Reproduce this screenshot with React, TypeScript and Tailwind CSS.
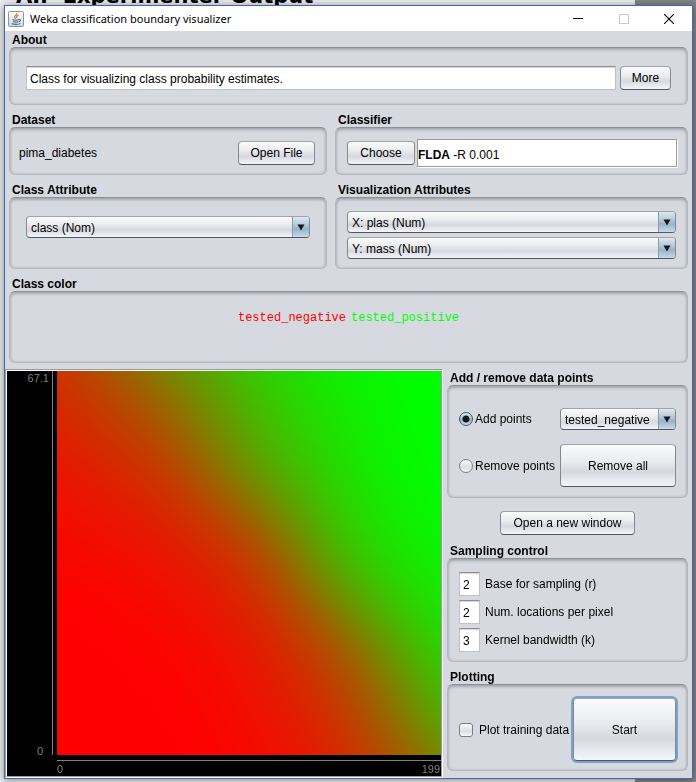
import { useEffect, useRef, useState } from "react";
import type { ButtonHTMLAttributes, ReactNode } from "react";

/* Probability of the "tested_positive" class on an evenly spaced 5x5 grid. */
const PROBABILITIES = [
  [0.21, 0.47, 0.76, 0.93, 0.99],
  [0.1, 0.23, 0.57, 0.86, 0.98],
  [0.03, 0.08, 0.25, 0.69, 0.93],
  [0.006, 0.022, 0.1, 0.36, 0.78],
  [0.002, 0.007, 0.045, 0.19, 0.54],
];

const LOGITS = PROBABILITIES.map((row) => row.map((p) => Math.log(p / (1 - p))));

function cubic(values: number[], t: number) {
  const last = values.length - 1;
  const i = Math.min(last - 1, Math.floor(t));
  const f = t - i;
  const b = values[i];
  const c = values[i + 1];
  const a = i > 0 ? values[i - 1] : 2 * b - c;
  const d = i + 2 <= last ? values[i + 2] : 2 * c - b;
  return b + 0.5 * f * (c - a + f * (2 * a - 5 * b + 4 * c - d + f * (3 * (b - c) + d - a)));
}

function BoundaryMap() {
  const ref = useRef<HTMLCanvasElement>(null);
  useEffect(() => {
    const ctx = ref.current?.getContext("2d");
    if (!ctx) return;
    const size = 384;
    const image = ctx.createImageData(size, size);
    for (let x = 0; x < size; x++) {
      const column = LOGITS.map((row) => cubic(row, (x / (size - 1)) * 4));
      for (let y = 0; y < size; y++) {
        const raw = 1 / (1 + Math.exp(-cubic(column, (y / (size - 1)) * 4)));
        const p = Math.min(1, Math.max(0, (raw - 0.01) / 0.98));
        const at = (y * size + x) * 4;
        image.data[at] = 255 * (1 - p);
        image.data[at + 1] = 255 * p;
        image.data[at + 3] = 255;
      }
    }
    ctx.putImageData(image, 0, 0);
  }, []);
  return <canvas ref={ref} width={384} height={384} aria-label="Class boundary plot" className="block aspect-square w-full" />;
}

function Panel({ title, className = "", children }: { title: string; className?: string; children: ReactNode }) {
  return (
    <section className="flex flex-col">
      <h2 className="h-[15px] pl-[3px] text-xs leading-[17px] font-bold">{title}</h2>
      <div
        className={`flex-1 rounded-md border border-[#b4b7bc] border-t-[#8d9095] shadow-[inset_0_2px_3px_rgba(60,65,75,0.28),inset_0_0_3px_rgba(60,65,75,0.2)] ${className}`}
      >
        {children}
      </div>
    </section>
  );
}

function Button({ className = "h-6 px-[11px]", ...rest }: ButtonHTMLAttributes<HTMLButtonElement>) {
  return (
    <button
      type="button"
      className={`shrink-0 rounded-[4px] border border-[#85888e] border-t-[#a0a3a8] border-b-[#53575d] bg-[linear-gradient(#fbfbfc,#e9ebee_40%,#d5d8de_65%,#f3f6fa)] text-center whitespace-nowrap ${className}`}
      {...rest}
    />
  );
}

function Combo({ label, value, options }: { label: string; value: string; options?: string[] }) {
  return (
    <div className="grid h-[22px] overflow-hidden rounded-[4px] border border-[#85888e] border-t-[#a0a3a8] border-b-[#53575d] bg-[linear-gradient(#fbfbfc,#e9ebee_40%,#d5d8de_65%,#f3f6fa)]">
      <select aria-label={label} defaultValue={value} className="w-full appearance-none bg-transparent pt-px pl-1 [grid-area:1/1]">
        {(options ?? [value]).map((o) => (
          <option key={o}>{o}</option>
        ))}
      </select>
      <span className="pointer-events-none flex w-[17px] items-center justify-center justify-self-end border-l border-[#7f9db6] bg-[linear-gradient(#dfe8f0,#b5c7d6_40%,#9db2c5_60%,#c3dbee)] [grid-area:1/1]">
        <svg width="8" height="7" viewBox="0 0 8 7" aria-hidden="true">
          <path d="M0.5 0.5H7.5L4 6.5Z" fill="#15191f" />
        </svg>
      </span>
    </div>
  );
}

const FIELD = "border border-[#c0c2c6] border-t-[#8d8e91] bg-white shadow-[inset_0_1px_1px_rgba(0,0,0,0.18)] outline-none";

function NumberField({ id, label, value }: { id: string; label: string; value: string }) {
  return (
    <div className="flex items-center gap-[5px]">
      <input id={id} defaultValue={value} className={`h-6 w-[21px] pt-px pl-[3px] ${FIELD}`} />
      <label htmlFor={id}>{label}</label>
    </div>
  );
}

function PointMode({ label, checked, onChange }: { label: string; checked: boolean; onChange: () => void }) {
  return (
    <label className="flex items-center gap-[2px] whitespace-nowrap">
      <input
        type="radio"
        name="mode"
        checked={checked}
        onChange={onChange}
        className="size-[14px] shrink-0 appearance-none rounded-full border border-[#7c7f85] bg-[linear-gradient(#fafafb,#dcdfe4_60%,#f5f7fa)] checked:border-[#3f5566] checked:bg-[radial-gradient(circle,#14181c_0_3px,transparent_4px),linear-gradient(#e3ecf3,#9fb5c7_60%,#c8dff0)]"
      />
      {label}
    </label>
  );
}

function JavaIcon() {
  return (
    <svg width="16" height="16" viewBox="0 0 16 16" className="shrink-0" aria-hidden="true">
      <defs>
        <linearGradient id="cup" x1="0" y1="0" x2="0" y2="1">
          <stop offset="0" stopColor="#fdfdfd" />
          <stop offset="1" stopColor="#cfd8de" />
        </linearGradient>
      </defs>
      <rect x="0.5" y="0.5" width="15" height="15" rx="1" fill="url(#cup)" stroke="#8096a6" />
      <path d="M8.8 2C9.6 4 5.6 4.6 6.8 6.6L7.6 8M10.4 4.2C8.4 5 8.4 6 9 7" fill="none" stroke="#e8762c" strokeWidth="1.3" />
      <path d="M4.5 8.6C6 9.4 9.5 9.3 11 8.6M5 10.4C6.5 11.2 9 11.1 10.3 10.5M11 8.6C13.2 8 13 10.4 10.8 10.8M3.6 12.5C6 13.7 10.5 13.6 12.4 12.4" fill="none" stroke="#47708f" strokeWidth="1.1" />
    </svg>
  );
}

function TitleBar() {
  return (
    <header className="flex h-[25px] items-center bg-white pl-[3px] text-black">
      <JavaIcon />
      <h1 className="flex-1 pl-[6px] font-['Noto_Sans','Open_Sans',sans-serif] text-[11px] leading-4">Weka classification boundary visualizer</h1>
      <button type="button" aria-label="Minimize" className="flex h-full w-[46px] items-center justify-center">
        <svg width="10" height="10" viewBox="0 0 10 10">
          <path d="M0 4.5H10" stroke="#000" />
        </svg>
      </button>
      <button type="button" aria-label="Maximize" className="flex h-full w-[45px] items-center justify-center">
        <svg width="10" height="10" viewBox="0 0 10 10">
          <path d="M0.5 0.5H9.5V9.5H0.5Z" fill="none" stroke="#c8c8c8" />
        </svg>
      </button>
      <button type="button" aria-label="Close" className="flex h-full w-[46px] items-center justify-center">
        <svg width="10" height="10" viewBox="0 0 10 10">
          <path d="M0 0L10 10M10 0L0 10" stroke="#000" strokeWidth="1.1" />
        </svg>
      </button>
    </header>
  );
}

function Plot() {
  return (
    <div className="flex min-w-0 flex-1 self-start border border-[#9a9b9e] border-r-white border-b-white">
      <div className="flex min-w-0 flex-1 border border-white border-r-[#9a9b9e] border-b-[#9a9b9e] bg-black text-[11px] leading-2 text-[#808080]">
        <div className="flex w-[46px] shrink-0 flex-col pb-[21px]">
          <div className="flex flex-1 flex-col items-end justify-between border-r border-[#808080] pt-[3px] pr-[3px]">
            <span>67.1</span>
            <span className="pr-[6px]">0</span>
          </div>
        </div>
        <div className="min-w-0 flex-1 pl-1">
          <BoundaryMap />
          <div className="mt-[5px] flex h-4 items-center justify-between border-t border-[#808080] pt-px pr-px">
            <span>0</span>
            <span>199</span>
          </div>
        </div>
      </div>
    </div>
  );
}

export default function App() {
  const [mode, setMode] = useState("add");
  return (
    <div className="min-h-screen overflow-hidden bg-[linear-gradient(to_left,#858585_61px,#ececec_61px)] pr-[3px] pb-[3px] pl-1 font-['Liberation_Sans',Arial,sans-serif] text-xs leading-4 text-black">
      <div className="flex h-[5px] items-end overflow-hidden pl-[12px] font-['DejaVu_Sans',sans-serif] text-[21px] leading-[18px] font-bold whitespace-nowrap">
        <p>AI.&nbsp; Experimenter Output</p>
      </div>
      <div className="relative border border-[#4267b5] bg-[#d6d9df] shadow-[0_1px_8px_rgba(0,0,0,0.45)]">
        <TitleBar />
        <main>
          <div className="flex flex-col gap-[7px] px-[4px] pt-px">
            <Panel title="About" className="flex gap-1 px-4 pt-[18px] pb-[14px]">
              <input aria-label="About" readOnly value="Class for visualizing class probability estimates." className={`h-6 min-w-0 flex-1 pt-px pl-[3px] ${FIELD}`} />
              <Button className="h-6 w-[51px]">More</Button>
            </Panel>
            <div className="grid grid-cols-[318fr_353fr] gap-x-2 gap-y-[7px]">
              <Panel title="Dataset" className="flex items-center justify-between pt-[13px] pr-[11px] pb-[9px] pl-[9px]">
                <span>pima_diabetes</span>
                <Button className="h-6 w-[77px]">Open File</Button>
              </Panel>
              <Panel title="Classifier" className="flex items-center gap-[2px] pt-[10px] pr-[10px] pb-[7px] pl-[11px]">
                <Button className="h-6 w-[68px]">Choose</Button>
                <div className="flex h-7 flex-1 items-center border border-[#9a9b9e] bg-white pt-1 shadow-[1px_1px_0_#fff]">
                  <b>FLDA</b>&nbsp;-R 0.001
                </div>
              </Panel>
              <Panel title="Class Attribute" className="px-4 pt-[18px]">
                <Combo label="Class attribute" value="class (Nom)" />
              </Panel>
              <Panel title="Visualization Attributes" className="flex flex-col gap-1 px-[11px] pt-[13px] pb-[9px]">
                <Combo label="X attribute" value="X: plas (Num)" />
                <Combo label="Y attribute" value="Y: mass (Num)" />
              </Panel>
            </div>
            <Panel title="Class color" className="flex justify-center gap-[5px] pt-[18px] pb-9 font-['Liberation_Mono','Courier_New',monospace]">
              <span className="text-[#ff0000]">tested_negative</span>
              <span className="text-[#00ff00]">tested_positive</span>
            </Panel>
          </div>
          <div className="flex gap-1 pt-[6px] pr-[4px]">
            <Plot />
            <div className="flex w-[241px] shrink-0 flex-col gap-[7px] pt-px">
              <Panel title="Add / remove data points" className="grid grid-cols-[minmax(0,1fr)_116px] items-center gap-y-[14px] pt-[22px] pr-[11px] pb-[10px] pl-[11px]">
                <PointMode label="Add points" checked={mode === "add"} onChange={() => setMode("add")} />
                <Combo label="Class of new points" value="tested_negative" options={["tested_negative", "tested_positive"]} />
                <PointMode label="Remove points" checked={mode === "remove"} onChange={() => setMode("remove")} />
                <Button className="h-[43px] w-full">Remove all</Button>
              </Panel>
              <div className="flex justify-center pt-[6px] pb-px">
                <Button className="h-6 w-[135px]">Open a new window</Button>
              </div>
              <Panel title="Sampling control" className="flex flex-col gap-1 px-[11px] pt-[13px] pb-[9px]">
                <NumberField id="base" label="Base for sampling (r)" value="2" />
                <NumberField id="locations" label="Num. locations per pixel" value="2" />
                <NumberField id="kernel" label="Kernel bandwidth (k)" value="3" />
              </Panel>
              <Panel title="Plotting" className="flex items-center justify-between pt-[13px] pr-[11px] pb-[9px] pl-[11px]">
                <label className="flex items-center gap-[6px] whitespace-nowrap">
                  <input
                    type="checkbox"
                    className="size-[14px] shrink-0 appearance-none rounded-[3px] border border-[#7c7f85] bg-[linear-gradient(#fafafb,#dcdfe4_60%,#f5f7fa)] checked:bg-[#8fa9bf]"
                  />
                  Plot training data
                </label>
                <Button className="h-[63px] w-[103px] ring-2 ring-[#73a4d1]">Start</Button>
              </Panel>
            </div>
          </div>
        </main>
      </div>
    </div>
  );
}
